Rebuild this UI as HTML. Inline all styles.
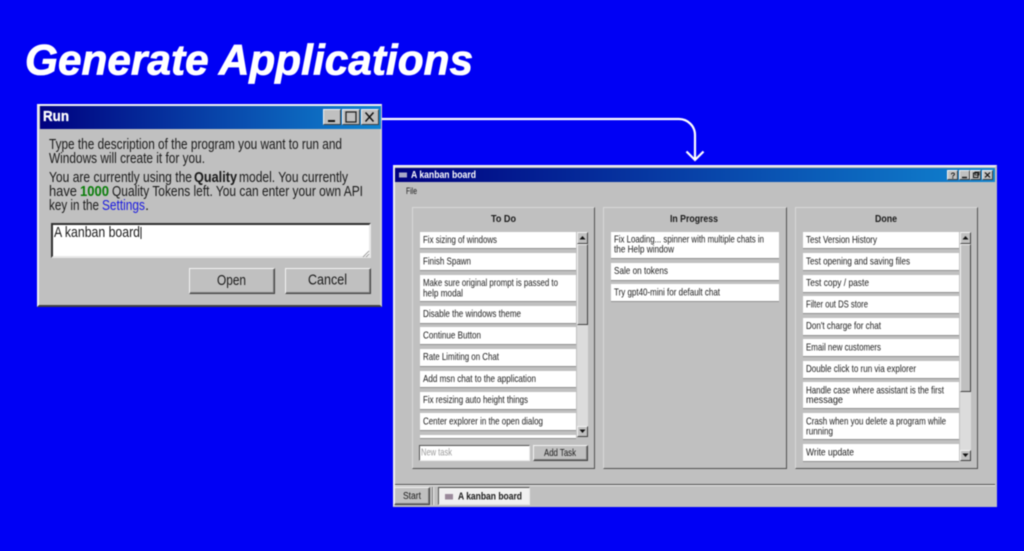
<!DOCTYPE html>
<html><head><meta charset="utf-8"><style>
html,body{margin:0;padding:0;width:1024px;height:551px;overflow:hidden;background:#0000f5}
#w{position:absolute;left:0;top:0;width:1024px;height:551px;filter:blur(.45px)}
#w div{position:absolute;box-sizing:border-box}
.r{background:#c0c0c0;border:1px solid;border-color:#f4f4f4 #404040 #404040 #f4f4f4;box-shadow:inset -1px -1px #808080}
.p{background:#c0c0c0;border:1px solid;border-color:#d8d8d8 #505050 #505050 #d8d8d8}
.c{background:#fff;box-shadow:0 1px #909090}
.s{background:#dcdcdc}
.g{background:#c0c0c0;border:1px solid;border-color:#f4f4f4 #404040 #404040 #f4f4f4}
svg{position:absolute;left:0;top:0}
text{font-family:"Liberation Sans",sans-serif;fill:#1a1a1a}
.k text{font-size:10.3px}
.u text{font-size:14.6px}
.h text{font-size:10px;font-weight:bold}
</style></head><body><div id="w">
<!-- Run window -->
<div style="left:37px;top:104px;width:345px;height:203px;background:#c0c0c0;border:2px solid;border-color:#f4f4f4 #d0d0d0 #404040 #f0f0f0"></div>
<div style="left:40px;top:106px;width:341px;height:23px;background:linear-gradient(90deg,#000080,#1084d0)"></div>
<div class="g" style="left:323px;top:109px;width:18px;height:16px"></div>
<div class="g" style="left:342px;top:109px;width:18px;height:16px"></div>
<div class="g" style="left:361px;top:109px;width:18px;height:16px"></div>
<div style="left:51px;top:223px;width:320px;height:35px;background:#fff;border:2px solid;border-color:#303030 #e8e8e8 #e8e8e8 #303030"></div>
<div class="r" style="left:189px;top:268px;width:86px;height:26px"></div>
<div class="r" style="left:285px;top:268px;width:86px;height:26px"></div>
<!-- Kanban window -->
<div style="left:393px;top:165px;width:604px;height:342px;background:#c0c0c0;border:2px solid;border-color:#f0f0f0 #c0c0c0 #c0c0c0 #f0f0f0"></div>
<div style="left:395px;top:168px;width:600px;height:14px;background:linear-gradient(90deg,#000080,#1084d0)"></div>
<div class="g" style="left:947px;top:170px;width:11px;height:10px"></div>
<div class="g" style="left:959px;top:170px;width:11px;height:10px"></div>
<div class="g" style="left:970px;top:170px;width:11px;height:10px"></div>
<div class="g" style="left:982px;top:170px;width:11px;height:10px"></div>
<div class="p" style="left:412px;top:207px;width:183px;height:262px"></div>
<div class="p" style="left:603px;top:207px;width:184px;height:262px"></div>
<div class="p" style="left:795px;top:207px;width:183px;height:262px"></div>
<!-- To Do cards -->
<div class="c" style="left:420px;top:232px;width:156px;height:16px"></div>
<div class="c" style="left:420px;top:253px;width:156px;height:17px"></div>
<div class="c" style="left:420px;top:275px;width:156px;height:26px"></div>
<div class="c" style="left:420px;top:306px;width:156px;height:17px"></div>
<div class="c" style="left:420px;top:327px;width:156px;height:17px"></div>
<div class="c" style="left:420px;top:349px;width:156px;height:17px"></div>
<div class="c" style="left:420px;top:371px;width:156px;height:16px"></div>
<div class="c" style="left:420px;top:392px;width:156px;height:17px"></div>
<div class="c" style="left:420px;top:413px;width:156px;height:17px"></div>
<div class="c" style="left:420px;top:435px;width:156px;height:3px"></div>
<div class="s" style="left:577px;top:232px;width:11px;height:205px"></div>
<div class="g" style="left:577px;top:232px;width:11px;height:12px"></div>
<div class="g" style="left:577px;top:244px;width:11px;height:81px"></div>
<div class="g" style="left:577px;top:426px;width:11px;height:11px"></div>
<div style="left:419px;top:445px;width:111px;height:16px;background:#fff;border:1px solid;border-color:#505050 #eee #eee #505050"></div>
<div class="r" style="left:533px;top:445px;width:55px;height:16px"></div>
<!-- In Progress cards -->
<div class="c" style="left:611px;top:232px;width:168px;height:26px"></div>
<div class="c" style="left:611px;top:263px;width:168px;height:17px"></div>
<div class="c" style="left:611px;top:284px;width:168px;height:17px"></div>
<!-- Done cards -->
<div class="c" style="left:803px;top:232px;width:156px;height:16px"></div>
<div class="c" style="left:803px;top:253px;width:156px;height:17px"></div>
<div class="c" style="left:803px;top:275px;width:156px;height:17px"></div>
<div class="c" style="left:803px;top:296px;width:156px;height:17px"></div>
<div class="c" style="left:803px;top:318px;width:156px;height:17px"></div>
<div class="c" style="left:803px;top:339px;width:156px;height:17px"></div>
<div class="c" style="left:803px;top:361px;width:156px;height:17px"></div>
<div class="c" style="left:803px;top:382px;width:156px;height:26px"></div>
<div class="c" style="left:803px;top:413px;width:156px;height:26px"></div>
<div class="c" style="left:803px;top:444px;width:156px;height:17px"></div>
<div class="s" style="left:960px;top:232px;width:11px;height:229px"></div>
<div class="g" style="left:960px;top:232px;width:11px;height:12px"></div>
<div class="g" style="left:960px;top:244px;width:11px;height:148px"></div>
<div class="g" style="left:960px;top:450px;width:11px;height:11px"></div>
<!-- Taskbar -->
<div style="left:395px;top:484px;width:600px;height:21px;background:#c0c0c0;border-top:1px solid #505050;box-shadow:inset 0 1px #eee"></div>
<div class="r" style="left:394px;top:487px;width:36px;height:18px"></div>
<div style="left:432px;top:487px;width:2px;height:18px;background:#808080;border-right:1px solid #eee"></div>
<div style="left:438px;top:487px;width:92px;height:18px;background:#f0f0f0;border:1px solid;border-color:#505050 #e8e8e8 #e8e8e8 #505050"></div>

<svg width="1024" height="551" viewBox="0 0 1024 551">
<text x="25" y="74.5" textLength="448" lengthAdjust="spacingAndGlyphs" style="font-size:43px;font-weight:bold;font-style:italic;fill:#fff;stroke:#fff;stroke-width:.8px">Generate Applications</text>
<path d="M382 119H679a16 16 0 0 1 16 16V160M686.5 151.5L695 160L703.500 151.500" fill="none" stroke="#fff" stroke-width="2.200"/>

<text x="43" y="121" textLength="26" lengthAdjust="spacingAndGlyphs" style="font-size:14.500px;font-weight:bold;fill:#fff;stroke:#fff;stroke-width:.3px">Run</text>
<path d="M328 121h7" stroke="#111" stroke-width="2"/>
<rect x="346" y="112" width="10" height="10" fill="none" stroke="#222" stroke-width="1.300"/>
<path d="M365.500 112.500l8 9M373.500 112.500l-8 9" stroke="#111" stroke-width="1.500"/>
<g class="u" transform="translate(0,-.8)">
<text x="49" y="150" textLength="293" lengthAdjust="spacingAndGlyphs">Type the description of the program you want to run and</text>
<text x="49" y="164" textLength="156" lengthAdjust="spacingAndGlyphs">Windows will create it for you.</text>
<text x="49" y="183" textLength="143" lengthAdjust="spacingAndGlyphs">You are currently using the</text>
<text x="194" y="183" textLength="43" lengthAdjust="spacingAndGlyphs" font-weight="bold">Quality</text>
<text x="239" y="183" textLength="109" lengthAdjust="spacingAndGlyphs">model. You currently</text>
<text x="49" y="197" textLength="28" lengthAdjust="spacingAndGlyphs">have</text>
<text x="80" y="197" textLength="29" lengthAdjust="spacingAndGlyphs" font-weight="bold" style="fill:#0a7d0a">1000</text>
<text x="112" y="197" textLength="251" lengthAdjust="spacingAndGlyphs">Quality Tokens left. You can enter your own API</text>
<text x="49" y="211" textLength="50" lengthAdjust="spacingAndGlyphs">key in the</text>
<text x="102" y="211" textLength="43" lengthAdjust="spacingAndGlyphs" style="fill:#1a1ae0">Settings</text>
<text x="145" y="211">.</text>
<text x="54" y="238" textLength="86" lengthAdjust="spacingAndGlyphs">A kanban board</text>
<text x="217" y="286" textLength="29" lengthAdjust="spacingAndGlyphs">Open</text>
<text x="308" y="285.500" textLength="39" lengthAdjust="spacingAndGlyphs">Cancel</text>
</g>
<path d="M141 227v12" stroke="#222" stroke-width="1"/>
<path d="M369 251l-6 6M369 254l-3 3" stroke="#888" stroke-width=".8"/>

<rect x="399" y="172.500" width="8" height="5" fill="#a8a8c8"/>
<text x="411" y="178" textLength="65" lengthAdjust="spacingAndGlyphs" style="font-size:10px;font-weight:bold;fill:#fff">A kanban board</text>
<text x="950.500" y="178.500" style="font-size:8px;font-weight:bold">?</text>
<path d="M962 177.500h5" stroke="#111" stroke-width="1.400"/>
<rect x="973.500" y="173" width="4.500" height="4.500" fill="none" stroke="#111"/><rect x="975" y="172" width="4" height="3" fill="none" stroke="#111" stroke-width=".8"/>
<path d="M985 172.500l5 5M990 172.500l-5 5" stroke="#111" stroke-width="1.200"/>
<text x="406" y="194" textLength="11" lengthAdjust="spacingAndGlyphs" style="font-size:9.500px">File</text>

<g class="h">
<text x="491" y="222" textLength="25" lengthAdjust="spacingAndGlyphs">To Do</text>
<text x="670" y="222" textLength="48" lengthAdjust="spacingAndGlyphs">In Progress</text>
<text x="875" y="222" textLength="22" lengthAdjust="spacingAndGlyphs">Done</text>
</g>
<g class="k" transform="translate(0,-.4)">
<text x="423" y="243.500" textLength="74" lengthAdjust="spacingAndGlyphs">Fix sizing of windows</text>
<text x="423" y="265" textLength="48" lengthAdjust="spacingAndGlyphs">Finish Spawn</text>
<text x="423" y="286.500" textLength="135" lengthAdjust="spacingAndGlyphs">Make sure original prompt is passed to</text>
<text x="423" y="297" textLength="40" lengthAdjust="spacingAndGlyphs">help modal</text>
<text x="423" y="317.500" textLength="98" lengthAdjust="spacingAndGlyphs">Disable the windows theme</text>
<text x="423" y="339" textLength="58" lengthAdjust="spacingAndGlyphs">Continue Button</text>
<text x="423" y="360.500" textLength="76" lengthAdjust="spacingAndGlyphs">Rate Limiting on Chat</text>
<text x="423" y="382.500" textLength="113" lengthAdjust="spacingAndGlyphs">Add msn chat to the application</text>
<text x="423" y="403.500" textLength="105" lengthAdjust="spacingAndGlyphs">Fix resizing auto height things</text>
<text x="423" y="425" textLength="120" lengthAdjust="spacingAndGlyphs">Center explorer in the open dialog</text>

<text x="614" y="243" textLength="150" lengthAdjust="spacingAndGlyphs">Fix Loading... spinner with multiple chats in</text>
<text x="614" y="253" textLength="60" lengthAdjust="spacingAndGlyphs">the Help window</text>
<text x="614" y="274.500" textLength="54" lengthAdjust="spacingAndGlyphs">Sale on tokens</text>
<text x="614" y="296" textLength="106" lengthAdjust="spacingAndGlyphs">Try gpt40-mini for default chat</text>

<text x="806" y="243.500" textLength="71" lengthAdjust="spacingAndGlyphs">Test Version History</text>
<text x="806" y="265" textLength="104" lengthAdjust="spacingAndGlyphs">Test opening and saving files</text>
<text x="806" y="286.500" textLength="63" lengthAdjust="spacingAndGlyphs">Test copy / paste</text>
<text x="806" y="308" textLength="62" lengthAdjust="spacingAndGlyphs">Filter out DS store</text>
<text x="806" y="329.500" textLength="75" lengthAdjust="spacingAndGlyphs">Don't charge for chat</text>
<text x="806" y="351" textLength="75" lengthAdjust="spacingAndGlyphs">Email new customers</text>
<text x="806" y="372.500" textLength="110" lengthAdjust="spacingAndGlyphs">Double click to run via explorer</text>
<text x="806" y="394" textLength="138" lengthAdjust="spacingAndGlyphs">Handle case where assistant is the first</text>
<text x="806" y="403.500" textLength="37" lengthAdjust="spacingAndGlyphs">message</text>
<text x="806" y="425" textLength="140" lengthAdjust="spacingAndGlyphs">Crash when you delete a program while</text>
<text x="806" y="435" textLength="27" lengthAdjust="spacingAndGlyphs">running</text>
<text x="806" y="456" textLength="48" lengthAdjust="spacingAndGlyphs">Write update</text>

<text x="421" y="456" textLength="31" lengthAdjust="spacingAndGlyphs" style="fill:#9a9a9a">New task</text>
<text x="544" y="456.500" textLength="32" lengthAdjust="spacingAndGlyphs">Add Task</text>
<text x="403" y="499.500" textLength="18" lengthAdjust="spacingAndGlyphs" style="font-size:10px">Start</text>
</g>
<path d="M579.500 239.500h6l-3 -3.500zM579.500 429.500h6l-3 3.500zM962.500 239.500h6l-3 -3.500zM962.500 453.500h6l-3 3.500z" fill="#111"/>
<rect x="445" y="494" width="8" height="5.500" fill="#9a8a9a"/>
<text x="458" y="499.500" textLength="64" lengthAdjust="spacingAndGlyphs" style="font-size:10px;font-weight:bold">A kanban board</text>
</svg>
</div></body></html>
